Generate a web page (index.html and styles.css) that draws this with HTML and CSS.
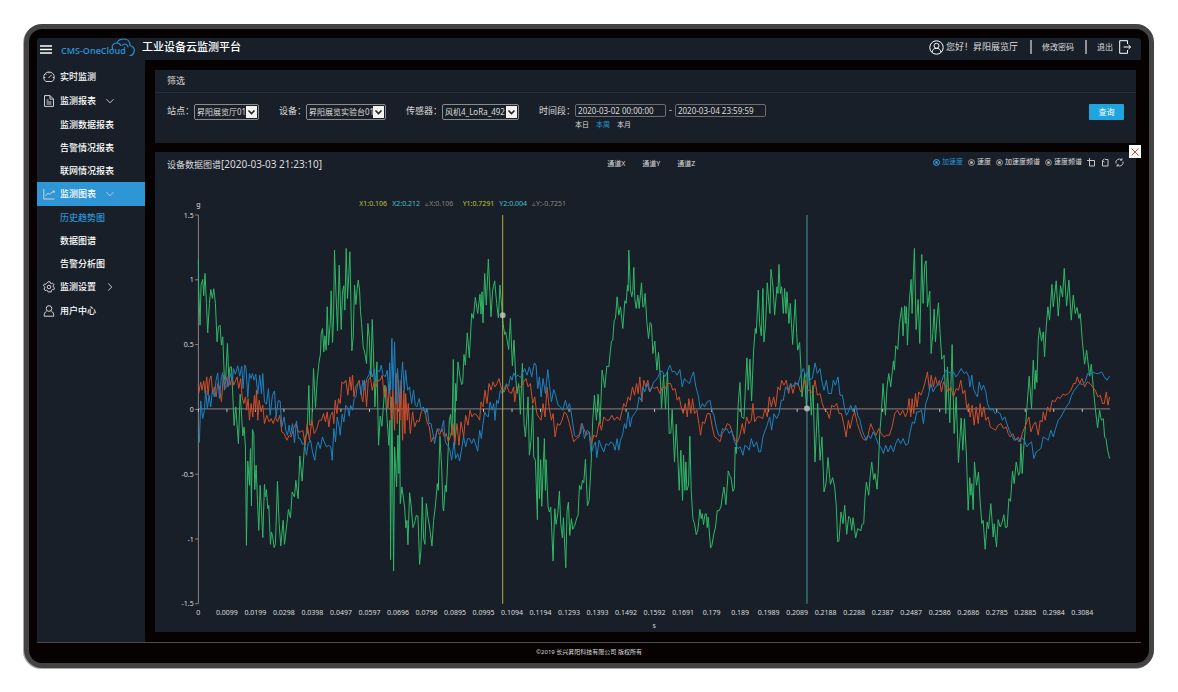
FILE: index.html
```
<!DOCTYPE html>
<html lang="zh-CN">
<head>
    <meta charset="utf-8">
    <meta name="viewport" content="width=device-width, initial-scale=1">
    <title>工业设备云监测平台</title>
    <link rel="stylesheet" href="styles.css">
    <script defer src="chart.js"></script>
</head>
<body>
    <div class="monitor">
        <header class="topbar">
            <button class="topbar__menu" type="button" aria-label="菜单">
                <svg width="12" height="9" viewBox="0 0 12 9"><path d="M0 1h12M0 4.500h12M0 8h12" stroke="#fff" stroke-width="1.300"/></svg>
            </button>
            <a class="logo" href="#" aria-label="CMS-OneCloud">
                <svg width="76" height="22" viewBox="0 0 76 22">
                    <text class="logo__text" x="1" y="16">CMS-OneCloud</text>
                    <path d="M53 11.500C51 8 53 5 57 5c1-3 4-4 7-4 4 0 6 3 6 6.500 3 1 5 3 4 6.500-.6 2-2 3.500-4 3.500M62 7.500c2-2.500 6-1.500 6 1.500M57 5c2 0 3 1 3.500 2.500" fill="none" stroke="#2b93d3" stroke-width="1.100" stroke-linecap="round"/>
                </svg>
            </a>
            <h1 class="topbar__title">工业设备云监测平台</h1>
            <div class="account">
                <svg width="15" height="15" viewBox="0 0 15 15" fill="none" stroke="#fff">
                    <circle cx="7.500" cy="7.500" r="6.700"/>
                    <circle cx="7.500" cy="5.800" r="2.500"/>
                    <path d="M3 12.300c.4-2.600 2-4 4.500-4s4.100 1.400 4.500 4"/>
                </svg>
                <span class="account__name">您好！昇阳展览厅</span>
                <a class="account__link" href="#">修改密码</a>
                <a class="account__link" href="#">退出
                    <svg width="13" height="14" viewBox="0 0 13 14" fill="none" stroke="#fff"><path d="M8.500 4V.7H.7v12.600h7.800V10M4.500 7h7M9.500 5l2.200 2-2.200 2"/></svg>
                </a>
            </div>
        </header>

        <div class="layout">
            <nav class="sidebar">
                <a class="sidebar__item" href="#">
                    <svg class="icon" viewBox="0 0 12 12"><path d="M2.800 10.500A5.300 5.300 0 1 1 9.200 10.500zM5.500 7l3-3M6 1v1.300M1 6.500h1.300M9.700 6.500H11M2.500 3l.8.8"/></svg>
                    <span>实时监测</span>
                </a>
                <a class="sidebar__item" href="#">
                    <svg class="icon" viewBox="0 0 12 12"><path d="M1.500.6h5.500l3.500 3.500v7.300h-9zM7 .6v3.500h3.500M3.500 5h2M3.500 7h5M3.500 9h5"/></svg>
                    <span>监测报表</span>
                    <svg class="chevron" viewBox="0 0 8 8"><path d="M.5 2.200L4 5.800l3.500-3.600"/></svg>
                </a>
                <a class="sidebar__sub" href="#">监测数据报表</a>
                <a class="sidebar__sub" href="#">告警情况报表</a>
                <a class="sidebar__sub" href="#">联网情况报表</a>
                <a class="sidebar__item sidebar__item--active" href="#">
                    <svg class="icon" viewBox="0 0 12 12"><path d="M.8 1v10H11.500M2.500 8l2.500-3 2 1.500L9 4h2M9.500 3h1.800v1.800"/></svg>
                    <span>监测图表</span>
                    <svg class="chevron" viewBox="0 0 8 8"><path d="M.5 2.200L4 5.800l3.500-3.600"/></svg>
                </a>
                <a class="sidebar__sub sidebar__sub--current" href="#">历史趋势图</a>
                <a class="sidebar__sub" href="#">数据图谱</a>
                <a class="sidebar__sub" href="#">告警分析图</a>
                <a class="sidebar__item" href="#">
                    <svg class="icon" viewBox="0 0 12 12"><circle cx="6" cy="6" r="1.800"/><path d="M5 .8h2l.3 1.400 1 .5 1.400-.6 1.200 1.500-.8 1.300.2 1.100 1.200.8-.7 1.900-1.500-.1-.9.8-.1 1.500H5l-.5-1.300-1-.5-1.400.5L.9 8l.9-1.200-.2-1.100L.5 4.800 1.300 3l1.500.1.9-.8z"/></svg>
                    <span>监测设置</span>
                    <svg class="chevron" viewBox="0 0 8 8"><path d="M2.200.5L5.800 4 2.200 7.500"/></svg>
                </a>
                <a class="sidebar__item" href="#">
                    <svg class="icon" viewBox="0 0 12 12"><circle cx="6" cy="3.500" r="2.800"/><path d="M3.800 6C2 7 1 8.700 1.200 11.200h9.600C11 8.700 10 7 8.200 6"/></svg>
                    <span>用户中心</span>
                </a>
            </nav>

            <main class="content">
                <section class="panel">
                    <h2 class="panel__title">筛选</h2>
                    <form class="filter">
                        <div class="field">
                            <label for="site">站点：</label>
                            <span class="select select--site">
                                <select id="site"><option>昇阳展览厅01</option></select>
                                <svg viewBox="0 0 11 12"><path d="M2.500 4.500l3 3 3-3" fill="none" stroke="#222" stroke-width="1.600"/></svg>
                            </span>
                        </div>
                        <div class="field">
                            <label for="device">设备：</label>
                            <span class="select select--device">
                                <select id="device"><option>昇阳展览实验台01</option></select>
                                <svg viewBox="0 0 11 12"><path d="M2.500 4.500l3 3 3-3" fill="none" stroke="#222" stroke-width="1.600"/></svg>
                            </span>
                        </div>
                        <div class="field">
                            <label for="sensor">传感器：</label>
                            <span class="select select--sensor">
                                <select id="sensor"><option>风机4_LoRa_492</option></select>
                                <svg viewBox="0 0 11 12"><path d="M2.500 4.500l3 3 3-3" fill="none" stroke="#222" stroke-width="1.600"/></svg>
                            </span>
                        </div>
                        <div class="field">
                            <label for="from">时间段：</label>
                            <div class="period">
                                <div class="period__range">
                                    <input id="from" type="text" value="2020-03-02 00:00:00">
                                    <span>-</span>
                                    <input type="text" value="2020-03-04 23:59:59" aria-label="结束时间">
                                </div>
                                <div class="period__quick">
                                    <a href="#">本日</a>
                                    <a class="is-current" href="#">本周</a>
                                    <a href="#">本月</a>
                                </div>
                            </div>
                        </div>
                        <button class="filter__submit" type="button">查询</button>
                    </form>
                </section>

                <section class="panel panel--chart">
                    <button class="close" type="button" aria-label="关闭">
                        <svg width="8" height="8" viewBox="0 0 8 8"><path d="M.5.5l7 7M7.500.5l-7 7" stroke="#e0452f"/></svg>
                    </button>
                    <div class="chart-head">
                        <h2 class="chart-head__title">设备数据图谱<span class="chart-head__date">[2020-03-03 21:23:10]</span></h2>
                        <div class="channels">
                            <a href="#">通道X</a>
                            <a href="#">通道Y</a>
                            <a href="#">通道Z</a>
                        </div>
                        <div class="modes">
                            <label><input type="radio" name="mode" checked><span>加速度</span></label>
                            <label><input type="radio" name="mode"><span>速度</span></label>
                            <label><input type="radio" name="mode"><span>加速度频谱</span></label>
                            <label><input type="radio" name="mode"><span>速度频谱</span></label>
                            <button type="button" aria-label="区域缩放"><svg viewBox="0 0 9 9"><path d="M0 2.500h7.500V8h-5V0"/></svg></button>
                            <button type="button" aria-label="缩放还原"><svg viewBox="0 0 9 9"><path d="M3.500.8L1.500 2.500l2 1.700M1.500 2.500V8h5.500V1.500H4"/></svg></button>
                            <button type="button" aria-label="还原"><svg viewBox="0 0 9 9"><path d="M1 5.500a3.500 3.500 0 0 1 5.700-3.600M8 3.500a3.500 3.500 0 0 1-5.700 3.600M6.900.3v1.800H5M2.100 8.700V6.900H4"/></svg></button>
                        </div>
                    </div>
                    <svg class="chart" id="chart" viewBox="-45 -42 2940 1368" role="img" aria-label="加速度波形">
                        <g class="chart__readout">
                            <text class="c1" x="567" y="49">X1:0.106</text>
                            <text class="c2" x="666" y="49">X2:0.212</text>
                            <text class="cd" x="765" y="49">▵X:0.106</text>
                            <text class="c1" x="877" y="49">Y1:0.7291</text>
                            <text class="c2" x="987" y="49">Y2:0.004</text>
                            <text class="cd" x="1085" y="49">▵Y:-0.7251</text>
                        </g>
                        <g id="axes"></g>
                        <g id="series"></g>
                        <g class="cursors">
                            <path class="cursor cursor--one" d="M997 75V1240"/>
                            <path class="cursor cursor--two" d="M1909 75V1240"/>
                            <circle cx="997" cy="375" r="9"/>
                            <circle cx="1909" cy="655" r="9"/>
                        </g>
                    </svg>
                </section>
            </main>
        </div>

        <footer class="footer">©2019 长兴昇阳科技有限公司 版权所有</footer>
    </div>
</body>
</html>
```
FILE: styles.css
```
:root {
    --panel: #181f28;
    --bezel: #060202;
    --text: #dcdcdc;
    --accent: #2b93d3;
    --axis: #8b8282;
}

* {
    box-sizing: border-box;
}

body {
    margin: 0;
    padding: 24px;
    background: #fff;
    color: var(--text);
    font-family: "Noto Sans", "Noto Sans CJK SC", sans-serif;
    font-size: 9px;
    line-height: 12px;
}

a {
    color: inherit;
    text-decoration: none;
}

h1, h2 {
    margin: 0;
    font-weight: 400;
}

button, input, select {
    margin: 0;
    padding: 0;
    border: 0;
    background: none;
    color: inherit;
    font: inherit;
}

svg {
    display: block;
    flex: none;
}

.monitor {
    display: flex;
    flex-direction: column;
    min-height: calc(100vh - 48px);
    padding: 9px 8px 0;
    border: 5px solid #434343;
    border-radius: 18px;
    background: var(--bezel);
    box-shadow: -1px 1px 0 #aaa8a8;
}

/* Top bar */
.topbar {
    display: flex;
    align-items: center;
    height: 22px;
    padding: 0 9px 0 3px;
    border-radius: 3px 3px 0 0;
    background: var(--panel);
}

.logo {
    margin: 0 6px 0 8px;
}

.logo__text {
    fill: var(--accent);
    font-family: "Open Sans", sans-serif;
    font-size: 9px;
    font-weight: 600;
}

.topbar__title {
    padding-bottom: 4px;
    color: #fff;
    font-size: 11px;
    font-weight: 500;
}

.account {
    display: flex;
    align-items: center;
    margin-left: auto;
    padding-bottom: 4px;
}

.account__name {
    margin: 0 12px 0 2px;
}

.account__link {
    display: flex;
    align-items: center;
    gap: 6px;
    height: 14px;
    font-size: 8px;
    border-left: 2px solid #8f9195;
}

.account__link {
    padding: 0 11px 0 10px;
}

.account__link:last-child {
    padding-right: 0;
}

/* Sidebar */
.layout {
    display: flex;
    flex: 1;
    border-bottom: 1px solid #4b4b4d;
}

.sidebar {
    flex: none;
    width: 108px;
    padding-top: 5px;
    background: var(--panel);
    color: #fff;
    font-weight: 500;
}

.sidebar__item,
.sidebar__sub {
    display: flex;
    align-items: center;
    height: 23px;
    padding-left: 23px;
}

.sidebar__item {
    gap: 5px;
    height: 24px;
    padding-left: 6px;
}

.sidebar__item--active {
    background: #2e96d4;
}

.sidebar__sub--current {
    color: var(--accent);
}

.icon {
    width: 12px;
    height: 12px;
    fill: none;
    stroke: #d0d2d4;
}

.chevron {
    width: 8px;
    height: 8px;
    margin-left: 5px;
    fill: none;
    stroke: #c4c7ca;
}

/* Panels */
.content {
    flex: 1;
    min-width: 0;
    padding: 10px 5px 10px 10px;
}

.panel {
    position: relative;
    background: var(--panel);
}

.panel + .panel {
    margin-top: 9px;
}

.panel__title {
    padding: 5px 12px;
    border-bottom: 1px solid #20303d;
    font-size: 9px;
}

.filter {
    display: flex;
    align-items: flex-start;
    gap: 20px;
    min-height: 50px;
    padding: 11px 12px;
}

.field {
    display: flex;
    flex: none;
}

.field label {
    padding-top: 1px;
}

.select {
    display: flex;
    align-items: center;
    height: 16px;
    padding: 0 1px 0 2px;
    border: 1px solid #8b8b8b;
    border-radius: 2px;
    font-size: 8px;
}

.select--site {
    width: 65px;
}

.select--device {
    width: 80px;
}

.select--sensor {
    width: 77px;
}

.select select {
    flex: 1;
    min-width: 0;
    appearance: none;
    outline: 0;
}

.select svg {
    width: 11px;
    height: 12px;
    background: #f2f2f2;
    pointer-events: none;
}

.period__range {
    display: flex;
    gap: 3px;
}

.period__range input {
    width: 91px;
    height: 13px;
    padding-left: 2px;
    border: 1px solid #6e6e70;
    border-radius: 2px;
    font-size: 8px;
}

.period__quick {
    display: flex;
    gap: 7px;
    padding-top: 2px;
    font-size: 7px;
}

.is-current {
    color: var(--accent);
}

.filter__submit {
    width: 35px;
    height: 16px;
    margin-left: auto;
    border-radius: 1px;
    background: #1fa5de;
    color: #fff;
    font-size: 8px;
}

/* Chart panel */
.close {
    position: absolute;
    top: -7px;
    right: -5px;
    display: grid;
    place-items: center;
    width: 12px;
    height: 13px;
    background: #fff;
}

.chart-head {
    display: grid;
    grid-template-columns: 46% auto 1fr;
    align-items: center;
    height: 24px;
    padding: 0 12px;
}

.chart-head__title {
    font-size: 9px;
}

.chart-head__date {
    font-size: 10px;
}

.channels {
    display: flex;
    gap: 17px;
    font-size: 7px;
}

.modes {
    display: flex;
    align-items: center;
    justify-content: flex-end;
    gap: 5px;
    padding-bottom: 4px;
    font-size: 7px;
}

.modes label {
    display: flex;
    align-items: center;
    gap: 2px;
}

.modes input {
    appearance: none;
    width: 7px;
    height: 7px;
    border: 1px solid #777;
    border-radius: 50%;
    background: #b4b4b4;
    box-shadow: inset 0 0 0 1px var(--panel);
}

.modes input:checked {
    border-color: var(--accent);
    background: var(--accent);
}

.modes input:checked + span {
    color: var(--accent);
}

.modes svg {
    width: 9px;
    height: 9px;
    fill: none;
    stroke: #c4c4c4;
}

.chart {
    width: 100%;
    height: auto;
    fill: var(--text);
    font-size: 21px;
}

.chart path {
    fill: none;
    vector-effect: non-scaling-stroke;
}

.axis {
    stroke: var(--axis);
}

.tick {
    stroke: #c8c4c4;
}

.c1 {
    fill: #c0c23c;
}

.c2 {
    fill: #45c3cb;
}

.cd {
    fill: #8c8585;
}

.cursor--one {
    stroke: #b5b138;
}

.cursor--two {
    stroke: #459b9d;
}

.cursors circle {
    fill: #c9d2cd;
    fill-opacity: 0.75;
}

.footer {
    padding: 3px 0 5px;
    font-size: 6px;
    text-align: center;
}
```
FILE: chart.js
```
const SVG_NS = 'http://www.w3.org/2000/svg';

// Plot area in viewBox units
const plot = { left: 85, right: 2817, top: 75, bottom: 1240, zero: 656 };

const xLabels = ['0', '0.0099', '0.0199', '0.0298', '0.0398', '0.0497', '0.0597', '0.0696', '0.0796', '0.0895', '0.0995',
    '0.1094', '0.1194', '0.1293', '0.1393', '0.1492', '0.1592', '0.1691', '0.179', '0.189', '0.1989', '0.2089',
    '0.2188', '0.2288', '0.2387', '0.2487', '0.2586', '0.2686', '0.2785', '0.2885', '0.2984', '0.3084'];
const yLabels = ['1.5', '1', '0.5', '0', '-0.5', '-1', '-1.5'];

// Each series comes in blocks: x offset of the block, then its x,y pairs
const series = [
    {
        name: '通道X', color: '#2fb868',
        blocks: [
            [0, '85,208 86,300 90,405 93,285 98,268 101,317 105,250 109,340 113,428 118,340 122,298 127,325 131,296 136,340 141,455 145,410 150,405 154,465 158,440 163,568 167,565 172,460 176,560 180,530 184,530 187,590 192,706 197,650 205,760 210,612 213,650 218,737 222,710 226,770 229,1065 233,812 238,885 241,775 244,947 247,718 251,730 254,898 258,825 262,930 266,1020 270,885 274,960 278,1042 283,882 286,920 289,898 293,955 296,945 301,1062 304,1025 308,1040 312,1072 316,1060 322,873 327,1000 332,1067 339,990 343,1062 348,1020 355,957 361,983 366,905 373,920 377,870 384,925 389,797 396,872 402,780 405,740 411,730 416,586 419,705 425,700 430,535 436,652 441,570 446,520 451,490 453,430 457,415 461,485 464,437 468,480 471,350 475,465 480,400 483,302 487,457 490,390 493,180 497,300 502,422 507,225 513,418 517,305 521,287 524,360 528,175 532,325 536,250 539,185 545,482 549,440 553,285 557,343 561,295 564,270 568,300 571,365 574,400 579,470 584,490 589,520 593,400 597,440 602,560 606,388 610,500 614,650 620,515 625,765 630,678 635,708 640,640 644,585 650,680 656,765 659,690 661,1108 665,620 670,1142 673,770 679,890 683,735 686,850 688,670 690,940 695,890 699,920 703,950 707,1013 710,990 713,1063 718,907 723,950 728,1012 733,998 738,975 743,977 748,1122 752,1080 756,920 760,1045 764,1062 768,940 773,980 778,1010 785,1067 790,990 795,950 801,880 804,900 809,738 814,830 818,950 820,962 825,885 828,905 834,770 837,690 841,672 845,735 849,508 853,765 856,580 858,632 863,515 869,560 874,583 877,580 881,493 885,525 891,428 897,503 904,370 909,385 915,322 922,370 929,312 932,372 935,305 938,398 943,250 948,345 954,207 962,380 967,300 973,272 979,340 984,383 989,285'],
            [990, '4,350 8,400 13,433 16,425 25,478 30,385 36,527 41,450 46,560 50,610 55,580 60,672 66,520 71,700 75,740 79,690 83,620 87,795 92,750 97,645 100,800 105,810 111,988 113,740 117,925 121,808 124,948 128,840 132,745 135,900 137,808 143,950 147,965 151,950 158,1112 163,955 167,1002 172,970 177,902 181,1000 186,1043 189,982 196,1132 200,960 204,935 208,1035 213,985 217,1017 223,1005 230,980 233,975 237,885 242,898 246,870 250,877 255,807 261,947 266,930 272,820 277,690 282,615 288,690 293,612 299,700 305,540 313,592 319,528 325,530 330,480 333,453 337,450 341,392 345,385 350,320 355,375 360,350 367,415 373,332 377,340 381,285 383,303 385,180 390,300 394,320 397,300 400,232 403,325 407,355 412,315 416,355 423,278 427,350 430,350 434,310 439,395 444,445 449,397 453,403 457,490 463,453 469,540 474,487 479,555 483,655 489,555 495,655 501,545 506,730 511,728 515,658 522,815 527,702 531,780 536,900 541,780 546,930 549,795 553,900 556,815 559,900 564,885 568,738 572,900 577,985 582,1000 587,1033 592,1018 598,957 602,985 605,970 609,1003 613,972 617,970 620,1012 623,980 630,1073 634,1065 640,1030 645,1010 650,960 655,962 661,950 665,920 670,890 676,943 683,842 687,855 691,860 697,903 701,895 704,770 707,790 713,640 718,577 723,680 730,685 734,600 739,503 743,600 748,507 753,632 759,480 764,415 767,430 773,300 777,400 782,437 787,295 790,455 795,400 800,278 804,330 808,370 811,238 817,290 822,375 829,290 832,310 835,223 839,310 843,290 848,370 852,295 856,370 859,305 865,400 869,340 876,463 884,328 888,430 891,480 897,457'],
            [1890, '1,540 4,620 12,550 17,650 25,525 32,675 37,585 43,815 51,640 58,810 64,740 70,905 76,880 82,802 89,882 96,862 102,890 107,950 111,1055 115,1050 121,965 127,1000 132,945 138,1032 144,978 149,985 153,1020 157,982 165,1043 171,1015 177,1018 180,1022 184,1002 189,1000 193,920 197,875 204,915 209,850 213,815 219,868 223,850 229,897 233,830 237,730 241,680 247,580 254,675 259,590 264,550 270,590 278,512 281,540 285,467 291,478 296,400 303,352 307,437 312,347 315,400 317,350 320,465 326,330 331,268 334,370 338,250 341,175 346,418 352,328 357,460 363,193 367,340 372,225 376,212 380,350 387,303 391,490 396,430 400,357 404,455 409,380 413,338 418,430 423,507 430,495 435,670 440,530 447,697 454,463 460,730 466,620 473,817 481,683 486,780 491,685 497,800 502,960 507,862 510,915 513,880 517,958 521,815 527,885 533,845 538,935 543,1000 547,990 553,1077 559,995 563,1015 570,940 577,1040 580,1000 587,1070 592,988 598,1010 604,995 609,973 614,1012 619,1010 624,925 629,933 635,842 640,880 646,815 653,855 657,845 660,760 664,850 668,780 674,705 679,640 685,558 692,655 697,510 702,597 705,540 708,577 712,450 716,413 722,453 727,425 731,500 736,410 741,350 746,390 753,283 757,350 766,272 772,378 779,287 785,320 790,235 797,348 804,270 811,390 817,315 823,370 828,352 834,385 838,370 844,450 851,522 857,480 866,558 871,522 877,590 883,655 890,713 896,660 901,690 907,685 911,740 915,745 920,780 926,805']
        ]
    },
    {
        name: '通道Y', color: '#cf4f2b',
        blocks: [
            [0, '86,610 92,575 96,600 101,572 105,608 110,560 114,615 118,570 123,557 128,610 133,590 138,620 143,580 148,590 154,635 160,555 165,595 170,590 175,555 180,585 186,560 191,585 196,572 201,560 206,595 212,565 216,620 221,640 226,620 230,660 234,625 238,690 243,640 248,680 253,615 256,660 259,600 263,690 267,630 273,665 278,645 283,700 290,675 297,695 303,685 309,700 316,680 322,695 329,675 335,725 342,730 350,750 357,735 363,740 370,715 377,700 385,725 392,725 398,720 405,765 411,700 418,750 425,690 432,730 440,715 447,690 454,690 460,670 466,695 471,665 476,710 481,675 487,665 491,700 495,630 500,670 505,625 510,640 515,575 521,580 527,570 533,615 539,560 543,600 547,555 551,620 556,590 562,580 567,570 572,610 578,635 583,570 589,650 594,570 600,560 606,600 612,575 618,590 624,570 630,570 636,555 642,620 648,590 653,655 658,580 663,690 668,600 673,720 677,560 679,550 681,700 685,570 689,690 693,570 697,750 701,600 704,730 706,610 711,690 714,640 720,730 727,665 733,710 740,690 746,695 753,665 758,660 764,660 770,695 777,710 783,755 789,740 795,745 801,715 808,735 815,715 822,740 828,730 834,755 840,740 848,700 853,760 860,700 866,765 872,695 880,740 886,675 893,705 899,660 905,680 912,670 920,675 928,690 932,635 938,650 944,600 950,640 956,580 962,600 968,575 974,590 980,580 986,565 992,590'],
            [990, '5,600 12,605 19,585 26,605 33,610 40,590 43,635 48,600 55,590 62,590 70,575 77,565 83,590 90,580 97,640 103,620 109,670 115,680 122,690 128,640 134,680 140,590 146,650 153,690 158,670 164,740 171,700 178,705 185,690 192,665 200,675 207,700 214,730 220,755 228,745 236,740 243,700 250,715 258,735 266,725 273,760 280,735 288,740 296,695 303,720 310,680 318,690 326,690 334,675 342,690 350,680 358,690 364,665 370,640 376,650 383,620 389,630 396,590 402,615 408,580 413,610 418,560 424,635 430,570 436,590 442,570 448,605 455,590 462,595 470,590 478,610 486,590 494,595 502,580 510,580 517,600 524,595 530,630 536,620 542,650 548,670 554,640 560,680 565,625 571,670 576,625 582,670 589,660 595,700 600,735 606,695 612,700 620,670 628,670 635,710 642,740 650,745 658,755 665,730 672,720 680,700 688,705 696,730 704,750 711,755 718,735 725,700 731,730 738,680 745,700 752,690 757,640 762,695 770,680 778,680 786,685 793,655 800,680 806,620 812,650 819,620 825,650 832,590 838,600 843,570 850,585 857,570 864,610 870,580 877,610 884,580 892,580'],
            [1890, '0,605 5,600 12,570 20,600 28,600 36,610 43,570 50,615 58,610 65,640 72,660 80,665 86,685 93,645 100,650 108,640 115,670 122,670 129,700 136,740 143,690 148,715 156,680 162,665 170,700 178,725 186,745 194,750 202,735 210,700 218,720 226,735 234,715 242,730 250,740 258,735 266,735 274,710 282,670 290,660 298,675 306,660 314,680 320,665 325,625 330,680 334,625 339,670 344,610 349,650 354,605 360,615 366,600 372,580 380,545 386,600 391,555 398,590 404,560 410,585 416,570 422,605 428,575 435,590 442,605 450,590 458,620 466,595 473,600 480,570 486,610 492,600 498,655 503,640 508,680 514,645 520,705 526,650 532,700 538,640 543,680 549,650 555,690 562,680 568,710 576,715 584,720 592,705 600,700 608,715 616,710 622,730 628,740 636,730 644,750 652,740 658,755 664,730 672,710 680,690 684,680 690,725 697,705 704,695 712,735 718,690 724,695 727,665 733,690 740,650 747,665 754,630 762,635 770,620 778,625 786,612 794,615 802,610 810,600 818,580 824,580 829,560 836,580 843,565 851,590 859,575 867,580 875,590 883,600 891,620 898,615 905,640 910,640 916,605 921,645 926,620']
        ]
    },
    {
        name: '通道Z', color: '#1f82bf',
        blocks: [
            [0, '85,760 88,755 92,632 98,685 103,660 107,600 112,655 117,615 122,650 127,600 133,620 138,570 143,548 148,625 154,560 158,547 163,600 168,560 174,590 180,550 187,575 190,535 196,552 203,527 209,558 215,528 219,595 224,524 228,535 233,622 238,550 243,565 247,550 252,570 257,552 263,612 269,555 274,610 278,550 283,635 289,642 295,595 300,675 307,615 313,602 318,680 324,632 330,632 335,710 342,680 347,720 352,735 357,705 361,733 367,700 373,758 379,692 385,745 390,745 397,762 403,760 409,795 414,760 421,750 427,785 434,810 439,770 444,755 450,775 457,740 462,755 469,770 476,765 482,770 486,810 491,715 496,755 501,680 507,710 510,735 516,672 521,695 527,645 533,655 537,678 541,645 547,660 552,625 557,620 562,582 568,580 573,615 578,570 583,600 590,565 597,553 600,535 607,560 612,538 617,575 622,540 628,545 633,525 638,552 645,560 651,540 656,610 658,518 661,600 665,445 668,600 673,455 677,640 682,535 688,640 693,570 697,515 702,600 706,540 712,600 718,590 724,640 730,600 735,645 740,650 747,625 753,660 759,650 765,670 771,655 776,700 782,700 788,730 793,760 799,725 805,715 812,725 820,690 825,755 831,765 838,775 844,810 851,755 856,805 862,790 868,812 875,770 880,740 886,770 892,745 898,745 904,760 910,745 917,765 922,783 928,720 933,745 938,700 943,665 948,675 954,680 959,635 965,660 970,640 974,690 979,630 984,640'],
            [990, '0,600 6,610 10,600 18,580 25,588 30,558 35,570 40,548 46,560 53,555 60,562 66,550 73,535 80,555 87,530 94,560 102,518 107,525 112,595 117,560 122,620 128,565 135,610 142,538 149,600 153,635 160,598 167,620 173,645 180,650 187,660 195,630 201,655 207,640 212,665 217,700 222,735 227,740 233,735 240,730 246,700 252,745 260,720 266,725 272,790 280,765 285,755 289,802 296,750 303,770 310,785 317,760 325,765 331,755 338,760 344,780 350,745 355,780 360,750 366,735 372,700 377,715 383,665 389,710 395,680 402,670 409,660 416,620 422,630 427,590 433,605 440,580 447,605 454,590 460,575 466,570 473,560 480,542 487,545 493,560 500,545 508,525 515,545 522,543 530,555 538,538 545,590 552,565 560,575 567,580 573,560 579,545 586,590 593,615 599,655 606,640 612,650 620,635 628,630 634,660 640,675 647,710 654,735 660,738 666,715 672,720 679,715 686,730 693,720 699,745 706,765 712,775 719,770 727,795 733,765 740,770 746,780 752,745 760,770 768,755 775,785 780,785 787,740 792,725 798,710 804,690 807,680 813,720 820,670 828,685 835,670 842,630 848,630 855,590 862,600 870,580 877,590 884,575 891,585'],
            [1890, '0,555 8,535 15,560 22,545 28,568 35,565 43,518 50,550 58,535 64,575 70,600 77,570 83,610 92,610 98,570 104,585 112,560 118,615 125,615 131,650 137,675 143,665 150,645 157,665 165,645 171,675 178,690 184,720 190,735 197,750 203,735 210,745 217,725 225,740 232,760 240,770 248,790 255,765 262,785 270,765 278,785 285,760 292,745 300,760 307,745 315,765 322,760 328,725 335,695 341,700 348,665 355,665 362,660 368,700 375,640 382,620 390,580 397,605 404,590 412,585 420,580 427,560 435,540 443,545 450,550 458,545 465,560 473,550 481,535 490,550 497,545 504,560 507,590 513,555 518,595 524,610 530,620 535,575 542,600 548,585 555,605 560,640 568,660 575,655 583,670 590,665 598,670 605,690 612,680 618,700 625,720 632,735 640,750 648,745 655,755 662,740 670,750 678,770 685,760 692,755 699,805 706,785 713,780 720,775 727,740 735,745 742,750 750,720 757,740 764,715 772,690 780,680 788,665 796,650 804,640 812,615 820,600 828,590 836,580 845,583 853,575 860,550 868,555 876,545 884,550 893,550 902,545 910,560 918,570 926,558']
        ]
    }
];

function addPath(parent, d, className, stroke) {
    const path = document.createElementNS(SVG_NS, 'path');
    path.setAttribute('d', d);
    if (className) path.setAttribute('class', className);
    if (stroke) path.setAttribute('stroke', stroke);
    parent.appendChild(path);
}

function addText(parent, text, x, y, anchor) {
    const node = document.createElementNS(SVG_NS, 'text');
    node.setAttribute('x', x);
    node.setAttribute('y', y);
    node.setAttribute('text-anchor', anchor);
    node.textContent = text;
    parent.appendChild(node);
}

function drawAxes() {
    const axes = document.getElementById('axes');
    addPath(axes, `M${plot.left} ${plot.top}V${plot.bottom}M${plot.left} ${plot.zero}H${plot.right}`, 'axis');

    yLabels.forEach((label, i) => {
        const y = plot.top + i * (plot.bottom - plot.top) / (yLabels.length - 1);
        addPath(axes, `M${plot.left - 10} ${y}H${plot.left}`, 'axis');
        addText(axes, label, plot.left - 14, y + 8, 'end');
    });

    const step = (2734 - plot.left) / (xLabels.length - 1);
    xLabels.forEach((label, i) => {
        const x = plot.left + i * step;
        addPath(axes, `M${x} ${plot.zero}v9`, 'tick');
        addText(axes, label, x, plot.bottom + 33, 'middle');
    });

    addText(axes, 'g', plot.left, 50, 'middle');
    addText(axes, 's', (plot.left + plot.right) / 2, plot.bottom + 74, 'middle');
}

function drawSeries() {
    const group = document.getElementById('series');
    series.forEach((line) => {
        const points = line.blocks.flatMap(([offset, block]) => block.split(' ').map((pair) => {
            const [x, y] = pair.split(',').map(Number);
            return `${x + offset} ${y}`;
        }));
        addPath(group, 'M' + points.join('L'), '', line.color);
    });
}

drawAxes();
drawSeries();
```
